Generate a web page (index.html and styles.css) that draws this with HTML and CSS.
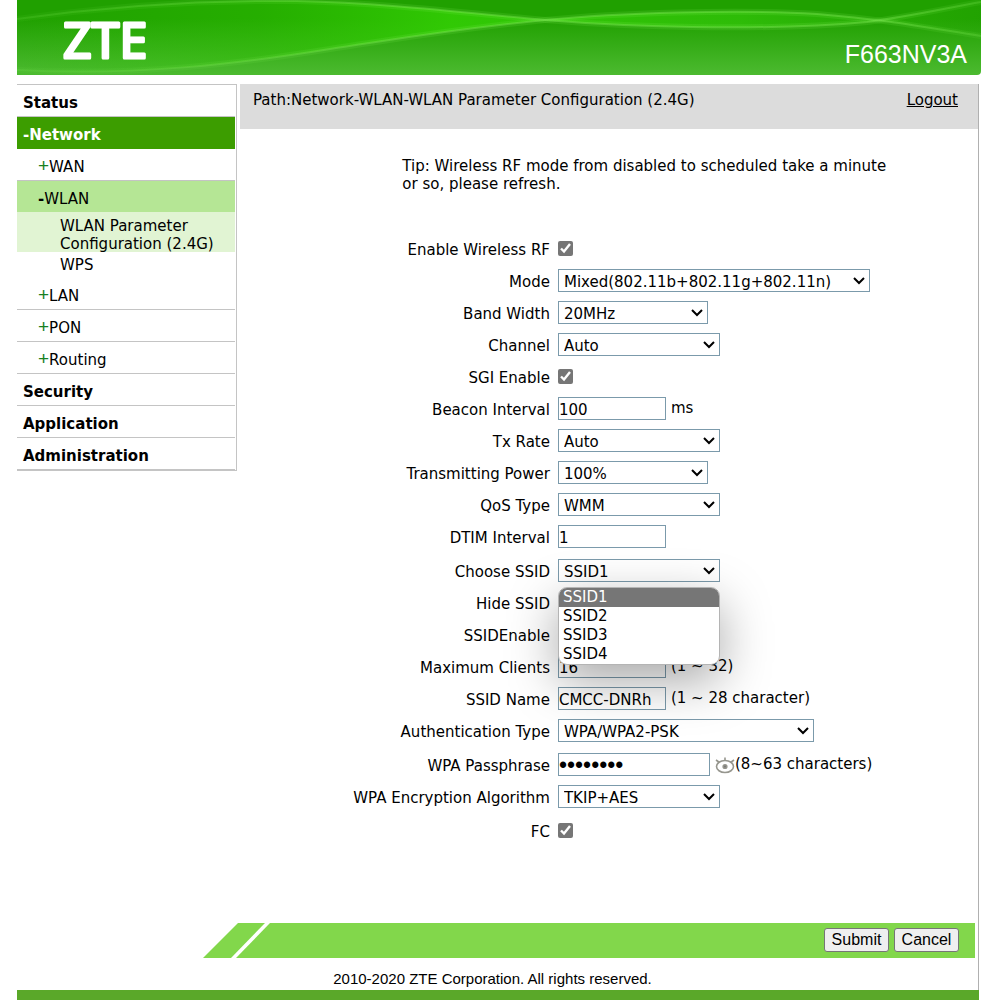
FILE: index.html
```html
<!DOCTYPE html>
<html lang="en">
  <head>
    <meta charset="UTF-8" />
    <meta
      name="viewport"
      content="width=device-width, initial-scale=1.0" />
    <title>F663NV3A</title>
    <link rel="stylesheet" href="styles.css">
  </head>
  <body>
    <div class="page">
      <header class="banner">
        <svg class="banner-waves" viewBox="0 0 964 75" preserveAspectRatio="none" aria-hidden="true">
          <defs>
            <linearGradient id="glow" x1="0" y1="0" x2="1" y2="0">
              <stop offset="0" stop-color="#2fc800" stop-opacity="0" />
              <stop offset="0.25" stop-color="#2fc800" stop-opacity="0.35" />
              <stop offset="0.45" stop-color="#33d004" stop-opacity="0.85" />
              <stop offset="0.75" stop-color="#33c80a" stop-opacity="0.7" />
              <stop offset="1" stop-color="#2fb808" stop-opacity="0.1" />
            </linearGradient>
            <linearGradient id="line" gradientUnits="userSpaceOnUse" x1="0" y1="0" x2="964" y2="0">
              <stop offset="0" stop-color="#7fea55" stop-opacity="0.4" />
              <stop offset="0.4" stop-color="#7fea55" />
              <stop offset="0.9" stop-color="#7fea55" />
              <stop offset="1" stop-color="#7fea55" stop-opacity="0.6" />
            </linearGradient>
          </defs>
          <path fill="url(#glow)" d="M0 19C100 5 190 0 280 1C370 3 450 13 528 20C600 26 740 32 850 22C890 17 930 8 964 2V36C900 26 870 20 800 14C720 9 600 13 528 20C430 30 380 39 313 49C220 64 120 76 0 70Z" />
          <g fill="none" stroke="url(#line)">
            <path class="wave-soft" d="M0 70C120 76 220 64 313 49C380 39 430 30 528 20C600 13 720 9 800 14C870 20 900 26 964 36" />
            <path class="wave-soft" d="M0 19C100 5 190 0 280 1C370 3 450 13 528 20C600 26 740 32 850 22C890 17 930 8 964 2" />
            <path class="wave-line" d="M0 70C120 76 220 64 313 49C380 39 430 30 528 20C600 13 720 9 800 14C870 20 900 26 964 36" />
            <path class="wave-line" d="M0 19C100 5 190 0 280 1C370 3 450 13 528 20C600 26 740 32 850 22C890 17 930 8 964 2" />
          </g>
        </svg>
        <svg class="logo" width="100" height="75" viewBox="0 0 100 75">
          <text x="2" y="58">ZTE</text>
        </svg>
        <span class="model">F663NV3A</span>
      </header>

      <div class="columns">
        <nav class="menu">
          <a class="menu-top" href="#">Status</a>
          <a class="menu-top menu-open" href="#">-Network</a>
          <a class="menu-sub" href="#"><span class="plus">+</span>WAN</a>
          <a class="menu-sub menu-sub-open" href="#"><b>-</b>WLAN</a>
          <div class="menu-leaves">
            <a class="menu-leaf menu-current" href="#">WLAN Parameter Configuration (2.4G)</a>
            <a class="menu-leaf" href="#">WPS</a>
          </div>
          <a class="menu-sub" href="#"><span class="plus">+</span>LAN</a>
          <a class="menu-sub" href="#"><span class="plus">+</span>PON</a>
          <a class="menu-sub" href="#"><span class="plus">+</span>Routing</a>
          <a class="menu-top" href="#">Security</a>
          <a class="menu-top" href="#">Application</a>
          <a class="menu-top" href="#">Administration</a>
        </nav>

        <main class="content">
          <div class="path">
            <span>Path:Network-WLAN-WLAN Parameter Configuration (2.4G)</span>
            <a href="#">Logout</a>
          </div>
          <p class="tip">Tip: Wireless RF mode from disabled to scheduled take a minute or so, please refresh.</p>

          <form class="settings" id="wlan">
            <div class="group">
              <div class="row">
                <label for="rf">Enable Wireless RF</label>
                <div class="field"><input type="checkbox" id="rf" checked></div>
              </div>
              <div class="row">
                <label for="mode">Mode</label>
                <div class="field"><select class="w-mode" id="mode"><option>Mixed(802.11b+802.11g+802.11n)</option></select></div>
              </div>
              <div class="row">
                <label for="band">Band Width</label>
                <div class="field"><select class="w-short" id="band"><option>20MHz</option></select></div>
              </div>
              <div class="row">
                <label for="channel">Channel</label>
                <div class="field"><select id="channel"><option>Auto</option></select></div>
              </div>
              <div class="row">
                <label for="sgi">SGI Enable</label>
                <div class="field"><input type="checkbox" id="sgi" checked></div>
              </div>
              <div class="row">
                <label for="beacon">Beacon Interval</label>
                <div class="field"><input type="text" id="beacon" value="100"><span class="hint">ms</span></div>
              </div>
              <div class="row">
                <label for="rate">Tx Rate</label>
                <div class="field"><select id="rate"><option>Auto</option></select></div>
              </div>
              <div class="row">
                <label for="power">Transmitting Power</label>
                <div class="field"><select class="w-short" id="power"><option>100%</option></select></div>
              </div>
              <div class="row">
                <label for="qos">QoS Type</label>
                <div class="field"><select id="qos"><option>WMM</option></select></div>
              </div>
              <div class="row">
                <label for="dtim">DTIM Interval</label>
                <div class="field"><input type="text" id="dtim" value="1"></div>
              </div>
            </div>

            <div class="group">
              <div class="row">
                <label for="ssid">Choose SSID</label>
                <div class="field">
                  <div class="dropdown">
                    <select id="ssid"><option>SSID1</option></select>
                    <ul class="options">
                      <li class="selected">SSID1</li>
                      <li>SSID2</li>
                      <li>SSID3</li>
                      <li>SSID4</li>
                    </ul>
                  </div>
                </div>
              </div>
              <div class="row">
                <label for="hide">Hide SSID</label>
                <div class="field"><input type="checkbox" id="hide"></div>
              </div>
              <div class="row">
                <label for="enable">SSIDEnable</label>
                <div class="field"><input type="checkbox" id="enable" checked></div>
              </div>
              <div class="row">
                <label for="clients">Maximum Clients</label>
                <div class="field"><input type="text" id="clients" value="16"><span class="hint">(1 ~ 32)</span></div>
              </div>
              <div class="row">
                <label for="name">SSID Name</label>
                <div class="field"><input type="text" id="name" value="CMCC-DNRh"><span class="hint">(1 ~ 28 character)</span></div>
              </div>
              <div class="row">
                <label for="auth">Authentication Type</label>
                <div class="field"><select class="w-auth" id="auth"><option>WPA/WPA2-PSK</option></select></div>
              </div>
            </div>

            <div class="group">
              <div class="row">
                <label for="pass">WPA Passphrase</label>
                <div class="field">
                  <input type="password" id="pass" value="12345678">
                  <svg class="eye" width="20" height="18" viewBox="0 0 20 18" fill="none" stroke="#96968e" stroke-width="1.6">
                    <ellipse cx="10" cy="10.500" rx="8.500" ry="6" />
                    <path d="M1 4L4.500 6.500M10 1.500V4.500M19 4L15.500 6.500" />
                    <circle cx="10" cy="10.500" r="1.800" fill="#777" />
                  </svg>
                  <span class="hint">(8~63 characters)</span>
                </div>
              </div>
              <div class="row">
                <label for="cipher">WPA Encryption Algorithm</label>
                <div class="field"><select id="cipher"><option>TKIP+AES</option></select></div>
              </div>
            </div>

            <div class="group">
              <div class="row">
                <label for="fc">FC</label>
                <div class="field"><input type="checkbox" id="fc" checked></div>
              </div>
            </div>
          </form>
        </main>
      </div>

      <footer class="footer">
        <div class="actions">
          <button type="submit" form="wlan">Submit</button>
          <button type="reset" form="wlan">Cancel</button>
        </div>
        <p class="copyright">2010-2020 ZTE Corporation. All rights reserved.</p>
      </footer>
      <div class="bottom-line"></div>
    </div>
  </body>
</html>
```
FILE: styles.css
```css
* {
  box-sizing: border-box;
}

body {
  margin: 0;
  background: #fff;
  color: #000;
  font: 15px/18px Verdana, 'DejaVu Sans', sans-serif;
}

a {
  color: inherit;
}

.page {
  padding: 0 19px 0 17px;
}

.banner {
  display: flex;
  justify-content: space-between;
  align-items: center;
  position: relative;
  height: 75px;
  padding: 0 14px 0 44px;
  background: linear-gradient(#20a000 25%, #4cba30);
  border-bottom-right-radius: 4px;
  overflow: hidden;
}

.banner-waves {
  position: absolute;
  inset: 0;
  width: 100%;
  height: 100%;
}

.wave-soft {
  stroke-width: 6;
  opacity: 0.15;
}

.wave-line {
  stroke-width: 2;
  opacity: 0.4;
}

.logo {
  position: relative;
}

.logo text {
  font: 50px 'Noto Sans', sans-serif;
  fill: #fff;
  stroke: #fff;
  stroke-width: 3;
  stroke-linejoin: round;
}

.model {
  position: relative;
  padding-top: 32px;
  color: #fff;
  font: 25px/28px 'Liberation Sans', Arial, sans-serif;
}

.columns {
  display: flex;
  align-items: flex-start;
  gap: 3px;
  margin: 9px 2px 0 0;
}

/* left menu */
.menu {
  flex: 0 0 220px;
  padding-right: 1px;
  border: 1px solid #c4c4c4;
  border-left: 0;
}

.menu a {
  display: block;
  text-decoration: none;
}

.menu-top,
.menu-sub {
  height: 32px;
  padding: 9px 0 0 6px;
  border-bottom: 1px solid #c4c4c4;
}

.menu-top {
  font-weight: bold;
}

.menu .menu-sub {
  display: flex;
  padding-left: 21px;
}

.menu-open {
  background: #3c9d00;
  border-color: #3c9d00;
  color: #fff;
}

.menu-sub-open {
  background: #b5e695;
  border-color: #e1f4d3;
}

.plus {
  color: #17801f;
  font: 19px/16px 'Liberation Sans', Arial, sans-serif;
}

.menu-leaf {
  padding: 4px 18px 4px 43px;
}

.menu-current {
  height: 39px;
  background: #e1f4d3;
}

/* right side */
.content {
  flex: 1;
  min-height: 839px;
  border-right: 1px solid #b0b0b0;
}

.path {
  display: flex;
  justify-content: space-between;
  height: 45px;
  padding: 7px 20px 0 13px;
  background: #dcdcdc;
}

.tip {
  max-width: 500px;
  margin: 28px 0 40px 22%;
}

.settings {
  display: flex;
  flex-direction: column;
  gap: 2px;
}

.row {
  display: grid;
  grid-template-columns: 42% 1fr;
  column-gap: 8px;
  align-items: center;
  height: 32px;
}

.row label {
  padding-top: 2px;
  text-align: right;
}

.field {
  display: flex;
  align-items: center;
  padding-bottom: 1px;
}

.hint {
  padding: 0 0 2px 5px;
}

select,
input {
  margin: 0;
  font: inherit;
  color: #000;
}

select,
input[type='text'],
input[type='password'] {
  height: 23px;
  border: 1px solid #7b9aab;
  border-radius: 0;
  background: #fff;
}

select {
  width: 162px;
  padding: 2px 20px 0 5px;
  appearance: none;
  background: #fff url("data:image/svg+xml,%3Csvg xmlns='http://www.w3.org/2000/svg' width='12' height='8' fill='none' stroke='%23000' stroke-width='2'%3E%3Cpath d='M1 1l5 5 5-5'/%3E%3C/svg%3E") no-repeat right 4px center;
}

input[type='text'] {
  width: 108px;
  padding: 2px 0 0;
}

input[type='password'] {
  width: 152px;
  padding: 1px 0 0;
  font: 23px/20px 'Liberation Sans', Arial, sans-serif;
}

input[type='checkbox'] {
  width: 15px;
  height: 15px;
  accent-color: #767676;
}

.w-mode {
  width: 312px;
}

.w-short {
  width: 150px;
}

.w-auth {
  width: 256px;
}

.eye {
  margin-left: 5px;
}

.eye + .hint {
  padding-left: 0;
}

.dropdown {
  display: flex;
  position: relative;
}

.options {
  position: absolute;
  z-index: 1;
  top: 28px;
  left: 0;
  right: 0;
  margin: 0;
  padding: 0;
  list-style: none;
  line-height: 19px;
  background: #fff;
  border: 1px solid #b4b4b4;
  border-radius: 9px;
  box-shadow: 0 16px 50px rgba(0, 0, 0, 0.35);
  overflow: hidden;
}

.options li {
  padding-left: 4px;
}

.options .selected {
  background: #767676;
  color: #fff;
}

/* footer */
.footer {
  margin-right: 2px;
  border-right: 1px solid #b0b0b0;
}

.actions {
  display: flex;
  justify-content: flex-end;
  align-items: center;
  gap: 5px;
  position: relative;
  height: 35px;
  margin: 0 3px 0 186px;
  padding: 0 16px 2px 0;
  background: #82d74b;
  clip-path: polygon(35px 0, 100% 0, 100% 100%, 0 100%);
}

/* white slash across the green bar */
.actions::before {
  content: '';
  position: absolute;
  top: 0;
  left: 28px;
  width: 39px;
  height: 35px;
  background: #fff;
  clip-path: polygon(34px 0, 100% 0, 5px 100%, 0 100%);
}

.actions button {
  width: 65px;
  height: 24px;
  padding: 0;
  border: 1px solid #767676;
  border-radius: 3px;
  background: #efefef;
  color: #000;
  font: 16px 'Liberation Sans', Arial, sans-serif;
}

.copyright {
  margin: 0;
  padding: 12px 10px 2px 0;
  font: 15px/18px 'Liberation Sans', Arial, sans-serif;
  text-align: center;
}

.bottom-line {
  height: 10px;
  margin-right: 2px;
  background: #5aa829;
}
```
